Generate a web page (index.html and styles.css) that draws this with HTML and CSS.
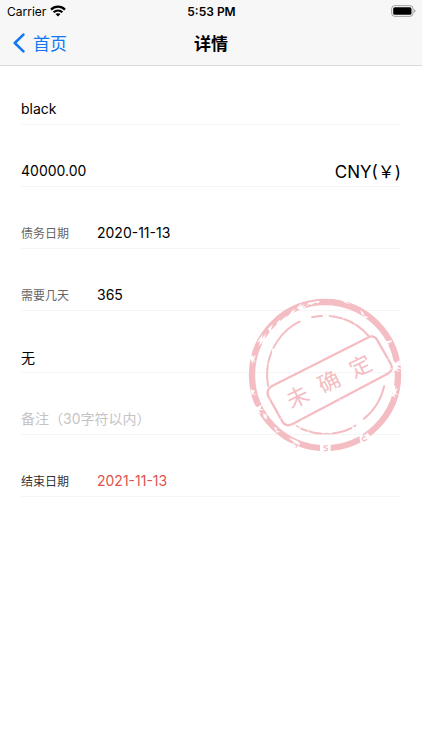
FILE: index.html
```html
<!DOCTYPE html>
<html lang="zh-CN">
<head>
    <meta charset="UTF-8">
    <meta name="viewport" content="width=device-width, initial-scale=1.0">
    <title>详情</title>
    <link rel="stylesheet" href="styles.css">
</head>
<body>

    <header class="header">
        <!-- Status bar -->
        <div class="status">
            <div class="carrier">
                <span>Carrier</span>
                <svg width="16" height="12" viewBox="0 0 16 12" fill="none" stroke="#000" stroke-width="2.2">
                    <path d="M1 4.6C5 .6 11 .6 15 4.6"/>
                    <path d="M3.6 7.3C6.2 4.9 9.8 4.9 12.4 7.3"/>
                    <path d="M8 11.6L5.5 9.1C6.9 7.9 9.1 7.9 10.5 9.1Z" fill="#000" stroke="none"/>
                </svg>
            </div>
            <span class="time">5:53 PM</span>
            <div class="battery">
                <svg width="25" height="12" viewBox="0 0 25 12">
                    <rect x=".7" y=".7" width="21.3" height="10.6" rx="3" fill="#fff" stroke="#9b9b9b"/>
                    <rect x="2.2" y="2.2" width="18.3" height="7.6" rx="1.6"/>
                    <path d="M23.3 4.2C24.8 4.8 24.8 7.2 23.3 7.8Z" fill="#888"/>
                </svg>
            </div>
        </div>

        <!-- Navigation bar -->
        <nav class="navbar">
            <a class="back" href="#">
                <svg width="12" height="20" viewBox="0 0 12 20" fill="none" stroke="currentColor" stroke-width="2.6" stroke-linecap="round" stroke-linejoin="round">
                    <path d="M10.4 1.6L1.8 10L10.4 18.4"/>
                </svg>
                <span>首页</span>
            </a>
            <h1 class="title">详情</h1>
        </nav>
    </header>

    <main class="content">
        <form class="form">
            <div class="row">
                <input type="text" id="name" aria-label="姓名" value="black">
            </div>
            <div class="row">
                <input type="text" id="amount" aria-label="金额" value="40000.00">
                <button type="button" class="currency">CNY(￥)</button>
            </div>
            <div class="row">
                <label for="debt_date">债务日期</label>
                <input type="text" id="debt_date" value="2020-11-13">
            </div>
            <div class="row">
                <label for="days">需要几天</label>
                <input type="text" id="days" value="365">
            </div>
            <div class="row">
                <input type="text" id="interest" aria-label="利息" value="无">
            </div>
            <div class="row">
                <input type="text" id="remark" aria-label="备注" placeholder="备注（30字符以内）">
            </div>
            <div class="row">
                <label for="end_date" class="dark">结束日期</label>
                <input type="text" id="end_date" class="red" value="2021-11-13">
            </div>
        </form>

        <!-- Status stamp over the form -->
        <svg class="stamp" viewBox="0 0 510 510" role="img" aria-label="未确定">
            <mask id="wear" maskUnits="userSpaceOnUse" x="0" y="0" width="510" height="510">
                <rect width="510" height="510" fill="#fff"/>
                <g fill="#000">
                    <path d="M108 100L122 88L119 96L139 77L132 91L146 80L136 97L121 106L111 117L116 102Z"/>
                    <path d="M145 78L158 61L167 58L160 69L175 64L167 72L153 76Z"/>
                    <path d="M170 54L186 39L181 50L194 42L187 53L201 45L193 55L180 61Z"/>
                    <path d="M204 38L239 32L236 39L224 38L214 45L209 42L202 48Z"/>
                    <path d="M52 157L68 132L66 146L79 128L73 145L88 137L74 154L83 152L65 165L70 154L56 169L61 154Z"/>
                    <path d="M26 201L40 194L36 202L48 196L42 207L47 219L38 209L40 224L31 208Z"/>
                    <path d="M84 116L99 102L92 119L104 114L89 127Z"/>
                    <path d="M178 91L186 97L205 87L214 93L212 78L205 83L192 84Z"/>
                    <path d="M246 71L256 76L264 73L270 84L256 80L250 85Z"/>
                    <path d="M95 177L104 174L99 186L106 193L96 188Z"/>
                    <path d="M300 26L322 34L317 36L334 43L316 39Z"/>
                    <path d="M361 59L373 71L369 76L385 82L377 85L365 73Z"/>
                    <path d="M431 155L456 151L454 157L443 159L448 165L435 162Z"/>
                    <path d="M458 211L467 218L485 208L478 220L487 224L470 229L486 237L469 236L480 247L463 240L454 246L462 228L451 220L461 221Z"/>
                    <path d="M456 281L467 289L464 299L473 293L467 309L476 315L462 312L466 321L455 318L459 306L451 302L459 299Z"/>
                    <path d="M426 340L437 336L432 349L442 345L432 356L436 364L422 359L415 366L419 352L410 350Z"/>
                    <path d="M382 385L396 374L393 386L405 379L395 393L387 397Z"/>
                    <path d="M43 344L52 352L67 343L61 356L74 360L56 361L64 372L51 366L46 372L41 357Z"/>
                    <path d="M69 370L80 374L81 389L71 382Z"/>
                    <path d="M101 410L112 415L107 420L120 425L110 428Z"/>
                    <path d="M32 298L45 302L39 310L50 315L34 312Z"/>
                    <path d="M145 443L158 447L172 453L181 461L170 474L177 478L162 482L151 470L160 472L155 459L167 461L158 454Z"/>
                    <path d="M240 457H273L271 490H240Z"/>
                    <path d="M358 437L366 428L370 437L383 428L391 438L381 446L392 452L377 459L363 464L360 451Z"/>
                    <path d="M156 411L165 404L172 412L188 413L174 418L168 422Z"/>
                    <path d="M202 421L209 428L206 436Z"/>
                    <path d="M333 409L347 412L350 400L358 404L366 392L376 389L380 397L366 407L367 414L351 413L341 422Z"/>
                </g>
            </mask>
            <g fill="none" stroke="#f4bdc3">
                <g mask="url(#wear)">
                    <circle cx="255" cy="255" r="219" stroke-width="19"/>
                    <path d="M85 290A174 178 0 0 1 202 85M214 82A174 178 0 0 1 386 138" stroke-width="6"/>
                    <path d="M433 286A178 178 0 0 1 370 388M354 403A178 178 0 0 1 274 431M247 431A178 178 0 0 1 165 406" stroke-width="6"/>
                </g>
                <!-- bits of ink left in the worn gaps -->
                <path d="M263 468Q251 465 252 472L262 476Q265 484 251 481M249 432L261 430L271 432" stroke-width="4"/>
                <path d="M377 440Q366 439 367 449L372 453L381 448M163 462L173 465L167 473" stroke-width="4"/>
                <path d="M96 288L383 143Q401 133 411 149L451 219Q463 239 443 251L162 400Q139 414 127 394L86 321Q76 299 96 288Z" stroke-width="7"/>
            </g>
            <path d="M307 79L312 88M348 97L343 106M91 219L82 223M297 327L304 332M117 370L126 383L119 388M180 395L188 389M447 203L440 210M456 235L449 239M90 329L82 333" fill="none" stroke="#fff" stroke-width="2"/>
            <text class="stamp-text" transform="translate(267 275) rotate(-26)" x="-105 0 105" y="24">未确定</text>
        </svg>
    </main>

</body>
</html>
```

FILE: styles.css
```css
* {
    margin: 0;
    padding: 0;
    box-sizing: border-box;
}

body {
    background: #fff;
    color: #000;
    font-family: Inter, "Noto Sans CJK SC", sans-serif;
}

/* Top area */
.header {
    background: #f7f7f7;
    border-bottom: 1px solid #d9d9d9;
}

.status {
    display: grid;
    grid-template-columns: 1fr auto 1fr;
    align-items: center;
    height: 22px;
    padding: 0 6px 0 7px;
    font-size: 12px;
}

.carrier {
    display: flex;
    align-items: center;
    gap: 4px;
}

.time {
    font-weight: 600;
}

.battery {
    display: flex;
    justify-content: flex-end;
}

.navbar {
    display: grid;
    grid-template-columns: 1fr auto 1fr;
    align-items: center;
    height: 43px;
    padding: 0 13px 2px;
}

.back {
    display: flex;
    align-items: center;
    gap: 8px;
    color: #1479f0;
    font-size: 17px;
    text-decoration: none;
}

.title {
    font-size: 17px;
    font-weight: 600;
}

/* Form */
.content {
    position: relative;
    padding: 21px 21px 0;
}

.form {
    display: flex;
    flex-direction: column;
    gap: 24px;
}

.row {
    display: flex;
    align-items: center;
    height: 38px;
    padding-top: 6px;
    border-bottom: 1px solid #f5f5f5;
}

label {
    width: 76px;
    color: #666;
    font-size: 12px;
}

label.dark {
    color: #333;
}

input {
    flex: 1;
    min-width: 0;
    border: none;
    outline: none;
    background: none;
    color: #000;
    font-family: inherit;
    font-size: 14px;
}

input::placeholder {
    color: #c4c4c6;
}

input.red {
    color: #e0524d;
}

.currency {
    border: none;
    background: none;
    color: #000;
    font-family: inherit;
    font-size: 17px;
}

/* Stamp */
.stamp {
    position: absolute;
    top: 224px;
    right: 12px;
    width: 170px;
    height: 170px;
    pointer-events: none;
}

.stamp-text {
    fill: #f4bdc3;
    font-family: "Noto Sans CJK SC", sans-serif;
    font-size: 66px;
    text-anchor: middle;
}
```
